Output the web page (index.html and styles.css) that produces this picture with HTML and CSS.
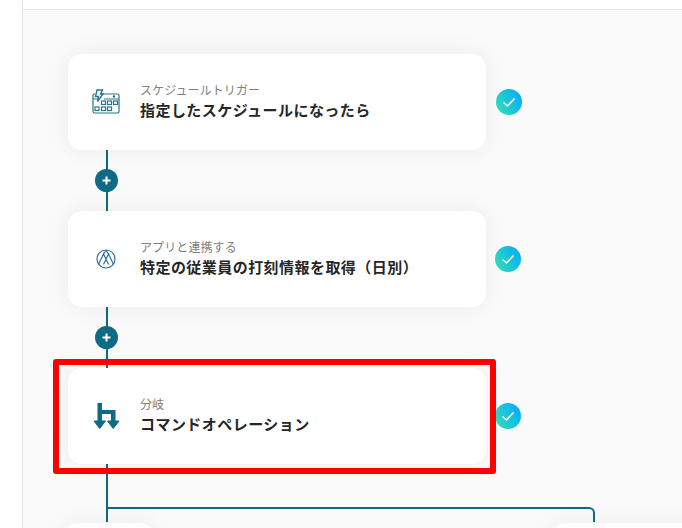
FILE: index.html
```html
<!DOCTYPE html>
<html lang="ja">
<head>
    <meta charset="UTF-8">
    <meta name="viewport" content="width=device-width, initial-scale=1.0">
    <title>フローボット</title>
    <link rel="stylesheet" href="styles.css">
</head>
<body>
    <div class="side"></div>
    <div class="main">
        <div class="top"></div>
        <div class="flow">

            <div class="step step-first">
                <div class="card">
                    <svg class="icon" viewBox="0 0 28 26" fill="none" stroke="#2a7689" stroke-width="1.2">
                        <path d="M7 5H25.5a1.5 1.5 0 0 1 1.5 1.5V22.5a1.5 1.5 0 0 1-1.5 1.5H2.5A1.5 1.5 0 0 1 1 22.5V6.5A1.5 1.5 0 0 1 2.5 5H3"/>
                        <path d="M1 10H5M12 10H27"/>
                        <path d="M5 1H10.5L8.5 5H11L5.5 12.5L6.5 7.5H3.5Z" fill="#fff" stroke-width="1.4"/>
                        <circle cx="22" cy="7.5" r=".7" fill="#2a7689"/>
                        <rect x="9.5" y="12" width="4" height="3.5"/>
                        <rect x="15.5" y="12" width="4" height="3.5"/>
                        <rect x="21.5" y="12" width="4" height="3.5"/>
                        <rect x="3" y="18" width="4" height="3.5"/>
                        <rect x="9.5" y="18" width="4" height="3.5"/>
                        <rect x="15.5" y="18" width="4" height="3.5"/>
                    </svg>
                    <div class="card-text">
                        <p class="card-label">スケジュールトリガー</p>
                        <p class="card-title">指定したスケジュールになったら</p>
                    </div>
                </div>
                <span class="check">
                    <svg viewBox="0 0 26 26" fill="none" stroke="#fff" stroke-width="1.6"><path d="M7.5 13.5L11.5 17L18.5 9.5"/></svg>
                </span>
            </div>

            <div class="connector">
                <span class="plus">
                    <svg viewBox="0 0 23 23" fill="none" stroke="#fff" stroke-width="2"><path d="M11.5 7.5V15.5M7.5 11.5H15.5"/></svg>
                </span>
            </div>

            <div class="step">
                <div class="card">
                    <svg class="icon icon-logo" viewBox="0 0 20 20" fill="none" stroke="#35709f" stroke-width="1.2">
                        <circle cx="10" cy="10" r="9"/>
                        <path d="M2.5 15.5L7.5 5L12.5 15.5M7.5 15.5L12.5 5L17.5 15.5"/>
                        <path d="M7.5 5L10 1.5L12.5 5"/>
                    </svg>
                    <div class="card-text">
                        <p class="card-label">アプリと連携する</p>
                        <p class="card-title">特定の従業員の打刻情報を取得（日別）</p>
                    </div>
                </div>
                <span class="check">
                    <svg viewBox="0 0 26 26" fill="none" stroke="#fff" stroke-width="1.6"><path d="M7.5 13.5L11.5 17L18.5 9.5"/></svg>
                </span>
            </div>

            <div class="connector">
                <span class="plus">
                    <svg viewBox="0 0 23 23" fill="none" stroke="#fff" stroke-width="2"><path d="M11.5 7.5V15.5M7.5 11.5H15.5"/></svg>
                </span>
            </div>

            <div class="step">
                <div class="card">
                    <svg class="icon" viewBox="0 0 28 28" fill="#0f6a84">
                        <path d="M5.5 1H10V8H23.5V19H19V12H10V19H5.5Z"/>
                        <path d="M2 19H13.5L7.7 26.5Z" stroke="#0f6a84" stroke-linejoin="round"/>
                        <path d="M15.5 19H27L21.2 26.5Z" stroke="#0f6a84" stroke-linejoin="round"/>
                    </svg>
                    <div class="card-text">
                        <p class="card-label">分岐</p>
                        <p class="card-title">コマンドオペレーション</p>
                    </div>
                </div>
                <span class="check">
                    <svg viewBox="0 0 26 26" fill="none" stroke="#fff" stroke-width="1.6"><path d="M7.5 13.5L11.5 17L18.5 9.5"/></svg>
                </span>
                <div class="highlight"></div>
            </div>

            <div class="fork">
                <div class="fork-branch"></div>
            </div>

            <div class="next-cards">
                <div class="next-card next-left"></div>
                <div class="next-card next-right"></div>
            </div>

        </div>
    </div>
</body>
</html>
```

FILE: styles.css
```css
html, body {
    height: 100%;
}

body {
    margin: 0;
    display: flex;
    overflow: hidden;
    background-color: #fff;
    font-family: "Noto Sans CJK JP", "Noto Sans", sans-serif;
}

p {
    margin: 0;
}

.side {
    width: 22px;
    flex-shrink: 0;
    border-right: 1px solid #e4e4e4;
}

.main {
    flex: 1;
    display: flex;
    flex-direction: column;
    min-width: 0;
}

.top {
    height: 9px;
    flex-shrink: 0;
    border-bottom: 1px solid #e4e4e4;
}

.flow {
    flex: 1;
    padding: 44px 0 0 45px;
    background-color: #fafafa;
    overflow: hidden;
}

.step {
    position: relative;
    display: flex;
    align-items: center;
    gap: 9px;
}

.step-first {
    gap: 10px;
}

.card {
    width: 418px;
    height: 96px;
    box-sizing: border-box;
    padding-left: 24px;
    display: flex;
    align-items: center;
    background-color: #fff;
    border-radius: 14px;
    box-shadow: 0 0 24px rgba(0, 0, 0, 0.06);
}

.icon {
    width: 28px;
    height: 28px;
    flex-shrink: 0;
    margin-right: 20px;
}

.icon-logo {
    width: 20px;
    height: 20px;
    margin-left: 4px;
    margin-right: 24px;
}

.card-text {
    display: flex;
    flex-direction: column;
    gap: 1px;
    padding-bottom: 2px;
}

.card-label {
    font-size: 12px;
    line-height: 17px;
    letter-spacing: 0.1px;
    color: #808080;
}

.card-title {
    font-size: 15px;
    line-height: 22px;
    font-weight: 700;
    letter-spacing: 0.45px;
    color: #262626;
}

.check {
    width: 26px;
    height: 26px;
    border-radius: 50%;
    background: linear-gradient(60deg, #2ed9bb 15%, #08aff8 85%);
}

.check svg {
    display: block;
}

.connector {
    width: 2px;
    height: 61px;
    margin-left: 38px;
    display: flex;
    align-items: center;
    justify-content: center;
    background-color: #0f6a84;
}

.plus {
    width: 23px;
    height: 23px;
    flex-shrink: 0;
    margin-right: 1px;
    border-radius: 50%;
    background-color: #0f6a84;
}

.plus svg {
    display: block;
}

.highlight {
    position: absolute;
    top: -9px;
    left: -15px;
    width: 443px;
    height: 115px;
    box-sizing: border-box;
    border: 6px solid #ff0000;
    border-radius: 3px;
}

.fork {
    width: 2px;
    height: 58px;
    box-sizing: border-box;
    padding-top: 43px;
    margin-left: 38px;
    background-color: #0f6a84;
}

.fork-branch {
    width: 489px;
    height: 15px;
    box-sizing: border-box;
    border-top: 2px solid #0f6a84;
    border-right: 2px solid #0f6a84;
    border-top-right-radius: 6px;
}

.next-cards {
    display: flex;
    margin-top: 1px;
    margin-left: -4px;
    gap: 398px;
}

.next-card {
    width: 90px;
    height: 96px;
    flex-shrink: 0;
    background-color: #fff;
    border-radius: 14px;
    box-shadow: 0 0 24px rgba(0, 0, 0, 0.06);
}

.next-right {
    width: 200px;
}
```
